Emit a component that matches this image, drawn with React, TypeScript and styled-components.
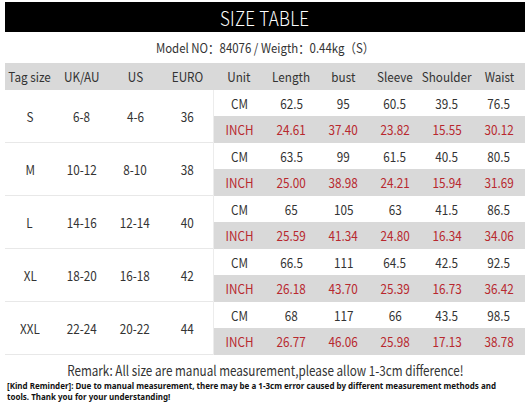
import React from "react";
import styled, { createGlobalStyle } from "styled-components";

const GlobalStyle = createGlobalStyle`
  body {
    margin: 0;
    background: #ffffff;
    font-family: "Noto Sans CJK SC", "Noto Sans", sans-serif;
    color: #333333;
  }
`;

const COLS = "50px 53px 54px 51px 52px 53px 51px 52px 52px 52px";

const Page = styled.div`
  width: 520px;
  margin: 0 5px;
  padding-top: 2px;
`;

// the reference lettering is narrower than any installed face, so squeeze it
const Squeeze = styled.span<{ $x?: number }>`
  display: inline-block;
  white-space: nowrap;
  transform: scaleX(${(p) => p.$x ?? 0.9});
  transform-origin: center;
`;

const TitleBar = styled.div`
  height: 30px;
  background: #000000;
  color: #ffffff;
  font-size: 20px;
  font-weight: 300;
  display: flex;
  align-items: center;
  justify-content: center;
  letter-spacing: 0.3px;
`;

const ModelLine = styled.div`
  height: 31px;
  display: flex;
  align-items: center;
  justify-content: center;
  font-size: 13px;
  color: #333333;
`;

const HeaderRow = styled.div`
  display: grid;
  grid-template-columns: ${COLS};
  height: 27px;
  background: #d9d9d9;
`;

const Cell = styled.div<{ $red?: boolean; $gray?: boolean; $left?: boolean }>`
  display: flex;
  align-items: center;
  justify-content: center;
  font-size: 13px;
  white-space: nowrap;
  color: ${(p) => (p.$red ? "#b8282e" : "#333333")};
  background: ${(p) => (p.$gray ? "#d9d9d9" : "transparent")};
  border-left: ${(p) => (p.$left ? "1px solid #ececec" : "none")};
`;

const Group = styled.div`
  display: grid;
  grid-template-columns: ${COLS};
  grid-template-rows: 26px 27px;
`;

const SizeCell = styled(Cell)`
  grid-row: span 2;
  border-bottom: 1px solid #e8e8e8;
`;

const Remark = styled.div`
  margin-top: 4px;
  height: 22px;
  display: flex;
  align-items: center;
  justify-content: center;
  font-size: 14px;
  color: #333333;
`;

const Reminder = styled.p`
  margin: -1px 0 0;
  padding: 0 2px;
  font-family: "Noto Sans", sans-serif;
  font-weight: 700;
  font-size: 8px;
  line-height: 11px;
  color: #111111;
  white-space: nowrap;
`;

const BottomRule = styled.div`
  margin-top: 8px;
  height: 1px;
  background: #9a9a9a;
`;

type Size = {
  tag: string;
  uk: string;
  us: string;
  euro: string;
  cm: string[];
  inch: string[];
};

const sizes: Size[] = [
  { tag: "S", uk: "6-8", us: "4-6", euro: "36", cm: ["62.5", "95", "60.5", "39.5", "76.5"], inch: ["24.61", "37.40", "23.82", "15.55", "30.12"] },
  { tag: "M", uk: "10-12", us: "8-10", euro: "38", cm: ["63.5", "99", "61.5", "40.5", "80.5"], inch: ["25.00", "38.98", "24.21", "15.94", "31.69"] },
  { tag: "L", uk: "14-16", us: "12-14", euro: "40", cm: ["65", "105", "63", "41.5", "86.5"], inch: ["25.59", "41.34", "24.80", "16.34", "34.06"] },
  { tag: "XL", uk: "18-20", us: "16-18", euro: "42", cm: ["66.5", "111", "64.5", "42.5", "92.5"], inch: ["26.18", "43.70", "25.39", "16.73", "36.42"] },
  { tag: "XXL", uk: "22-24", us: "20-22", euro: "44", cm: ["68", "117", "66", "43.5", "98.5"], inch: ["26.77", "46.06", "25.98", "17.13", "38.78"] },
];

const headers = ["Tag size", "UK/AU", "US", "EURO", "Unit", "Length", "bust", "Sleeve", "Shoulder", "Waist"];

const App: React.FC = () => {
  return (
    <Page>
      <GlobalStyle />
      <TitleBar>
        <Squeeze $x={0.85}>SIZE TABLE</Squeeze>
      </TitleBar>
      <ModelLine>
        <Squeeze $x={0.88}>Model NO：84076 / Weigth：0.44kg（S）</Squeeze>
      </ModelLine>
      <HeaderRow>
        {headers.map((h) => (
          <Cell key={h}>
            <Squeeze>{h}</Squeeze>
          </Cell>
        ))}
      </HeaderRow>
      {sizes.map((s) => (
        <Group key={s.tag}>
          <SizeCell><Squeeze>{s.tag}</Squeeze></SizeCell>
          <SizeCell><Squeeze>{s.uk}</Squeeze></SizeCell>
          <SizeCell><Squeeze>{s.us}</Squeeze></SizeCell>
          <SizeCell><Squeeze>{s.euro}</Squeeze></SizeCell>
          <Cell $left><Squeeze>CM</Squeeze></Cell>
          {s.cm.map((v, i) => (
            <Cell key={"cm" + i}><Squeeze>{v}</Squeeze></Cell>
          ))}
          <Cell $left $gray $red><Squeeze>INCH</Squeeze></Cell>
          {s.inch.map((v, i) => (
            <Cell key={"in" + i} $gray $red>
              <Squeeze>{v}</Squeeze>
            </Cell>
          ))}
        </Group>
      ))}
      <Remark>
        <Squeeze $x={0.835}>Remark: All size are manual measurement,please allow 1-3cm difference!</Squeeze>
      </Remark>
      <Reminder>
        [Kind Reminder]: Due to manual measurement, there may be a 1-3cm error caused by different measurement methods and
        <br />
        tools. Thank you for your understanding!
      </Reminder>
      <BottomRule />
    </Page>
  );
};

export default App;
